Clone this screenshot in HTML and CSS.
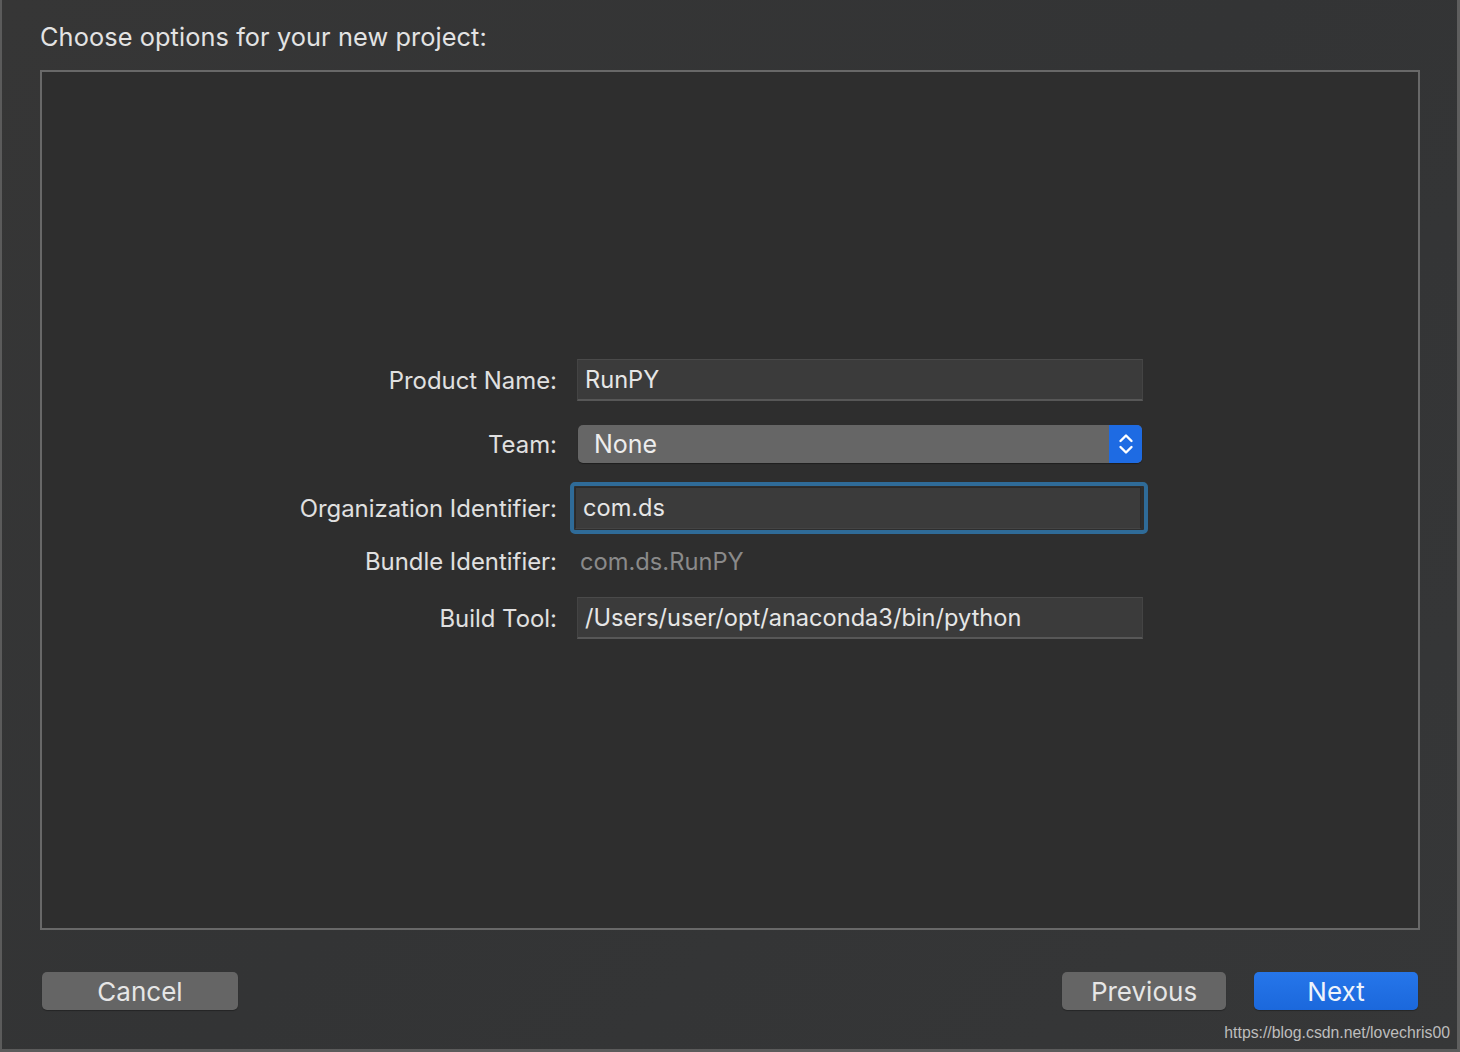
FILE: index.html
```html
<!DOCTYPE html>
<html>
<head>
<meta charset="utf-8">
<link rel="stylesheet" href="styles.css">
</head>
<body>
<div class="window">
  <div class="title">Choose options for your new project:</div>
  <div class="panel">
    <div class="form">
      <div class="row r1">
        <div class="label">Product Name:</div>
        <div class="field">RunPY</div>
      </div>
      <div class="row r2">
        <div class="label">Team:</div>
        <div class="popup">
          <span class="popup-text">None</span>
          <span class="stepper">
            <svg width="20" height="30" viewBox="0 0 20 30">
              <path d="M4.5 12 L10 6.5 L15.5 12" fill="none" stroke="#fff" stroke-width="2.4" stroke-linecap="round" stroke-linejoin="round"/>
              <path d="M4.5 18 L10 23.5 L15.5 18" fill="none" stroke="#fff" stroke-width="2.4" stroke-linecap="round" stroke-linejoin="round"/>
            </svg>
          </span>
        </div>
      </div>
      <div class="row r3">
        <div class="label">Organization Identifier:</div>
        <div class="ring"><div class="field focused">com.ds</div></div>
      </div>
      <div class="row r4">
        <div class="label">Bundle Identifier:</div>
        <div class="static">com.ds.RunPY</div>
      </div>
      <div class="row r5">
        <div class="label">Build Tool:</div>
        <div class="field">/Users/user/opt/anaconda3/bin/python</div>
      </div>
    </div>
  </div>
  <div class="footer">
    <button class="btn cancel">Cancel</button>
    <div class="right-btns">
      <button class="btn prev">Previous</button>
      <button class="btn next">Next</button>
    </div>
  </div>
  <div class="watermark">https://blog.csdn.net/lovechris00</div>
</div>
</body>
</html>
```

FILE: styles.css
```css
html, body {
  margin: 0;
  padding: 0;
  background: #353535;
}
.window {
  box-sizing: border-box;
  width: 1460px;
  height: 1052px;
  background: linear-gradient(135deg, #363636 0%, #333435 50%, #363738 100%);
  border-left: 2px solid #5b5b5b;
  border-right: 3px solid #5e5e5e;
  border-bottom: 3px solid #5b5b5b;
  padding-left: 38px;
  font-family: Inter, "Noto Sans", sans-serif;
  color: #e2e2e2;
  position: relative;
}
.title {
  padding-top: 20px;
  height: 70px;
  box-sizing: border-box;
  font-size: 25.3px;
  line-height: 34px;
  color: #e3e3e3;
  letter-spacing: 0.1px;
}
.panel {
  box-sizing: border-box;
  width: 1380px;
  height: 860px;
  border: 2px solid #686868;
  background: #2e2e2e;
  padding-top: 287px;
}
.form {
  display: flex;
  flex-direction: column;
}
.row {
  display: flex;
  align-items: center;
}
.label {
  width: 515px;
  text-align: right;
  font-size: 23.9px;
  color: #e0e0e0;
  margin-right: 20px;
}
.r1 { height: 42px; }
.r2 { height: 38px; margin-top: 24px; }
.r3 { height: 42px; margin-top: 24px; }
.r4 { height: 40px; margin-top: 12px; }
.r5 { height: 42px; margin-top: 16px; }
.field {
  box-sizing: border-box;
  width: 566px;
  height: 42px;
  background: #3b3b3b;
  border-top: 1px solid #4a4a4a;
  border-left: 1px solid #444;
  border-right: 1px solid #444;
  border-bottom: 2px solid #575757;
  padding-left: 7px;
  font-size: 23.6px;
  line-height: 40px;
  color: #e6e6e6;
}
.ring {
  margin-left: -7px;
  box-sizing: border-box;
  width: 578px;
  height: 52px;
  border: 4px solid #2f6b98;
  border-radius: 5px;
  padding: 1px;
  display: flex;
}
.field.focused {
  width: 566px;
  height: 42px;
  border: 1px solid #2a2a2a;
  border-bottom: 1px solid #444;
  line-height: 40px;
}
.popup {
  margin-left: 1px;
  box-sizing: border-box;
  width: 564px;
  height: 38px;
  background: #666666;
  border-radius: 5px;
  display: flex;
  align-items: center;
  justify-content: space-between;
  overflow: hidden;
  box-shadow: 0 1px 1px rgba(0,0,0,0.35);
}
.popup-text {
  padding-left: 16px;
  font-size: 25px;
  color: #ededed;
}
.stepper {
  width: 33px;
  height: 38px;
  background: #1e6be3;
  display: flex;
  align-items: center;
  justify-content: center;
}
.static {
  padding-left: 3px;
  font-size: 23.7px;
  color: #8a8a8a;
}
.footer {
  display: flex;
  justify-content: space-between;
  margin-top: 42px;
  padding-left: 2px;
  width: 1376px;
}
.right-btns {
  display: flex;
  gap: 28px;
}
.btn {
  height: 38px;
  border: none;
  border-radius: 5px;
  font-family: Inter, "Noto Sans", sans-serif;
  font-size: 26px;
  color: #e6e6e6;
  background: #656565;
  padding: 0;
  box-shadow: 0 1px 1px rgba(0,0,0,0.3);
}
.cancel { width: 196px; }
.prev { width: 164px; }
.next {
  width: 164px;
  background: linear-gradient(#2676ea, #1b68dc);
  color: #eef3fb;
}
.watermark {
  position: absolute;
  right: 7px;
  bottom: 7px;
  font-family: "Liberation Sans", Arial, sans-serif;
  font-size: 15.8px;
  color: #bdbdbd;
}
```
